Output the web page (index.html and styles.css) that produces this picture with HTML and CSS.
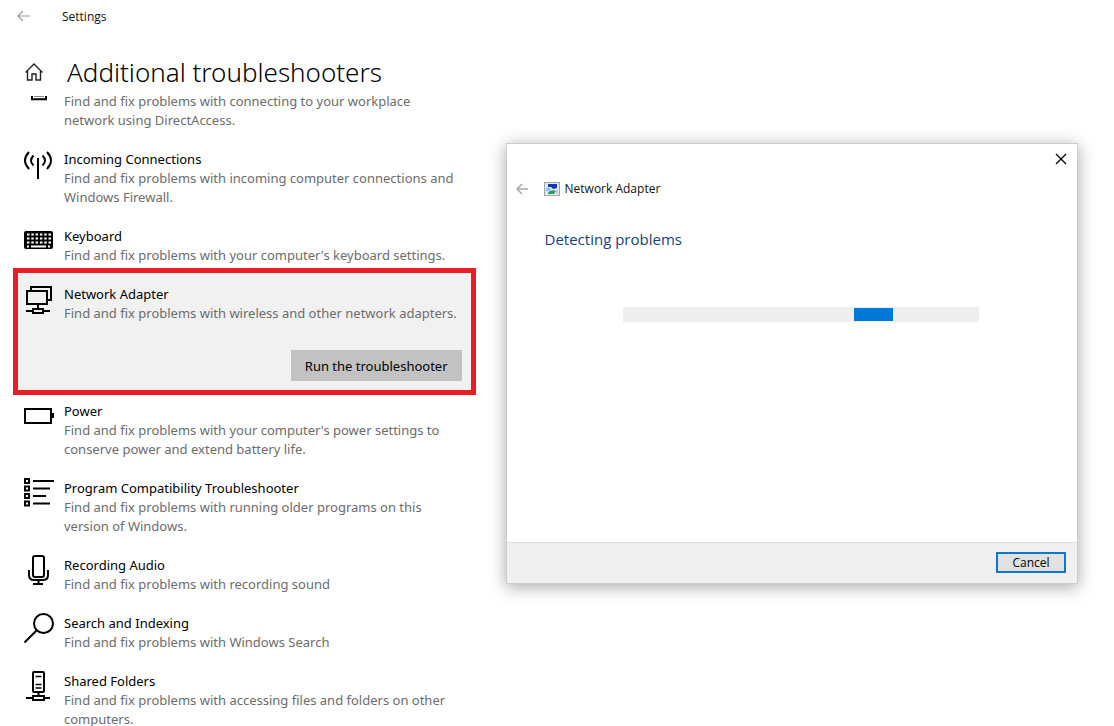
FILE: index.html
```
<!DOCTYPE html>
<html lang="en">
<head>
<meta charset="utf-8">
<title>Settings</title>
<link rel="stylesheet" href="styles.css">
</head>
<body>
<div class="desktop">
  <main class="settings">
    <header class="titlebar">
      <button class="back" type="button" aria-label="Back">
        <svg width="14" height="12" viewBox="0 0 14 12"><path d="M1 6H13M6 1L1 6L6 11" fill="none" stroke="#999" stroke-width="1.2"/></svg>
      </button>
      <span>Settings</span>
    </header>
    <div class="heading">
      <a class="home" href="#" aria-label="Home">
        <svg width="20" height="20" viewBox="0 0 20 20"><path d="M1.5 10.5L10 2L18.500 10.500M3.500 9V18H8V12H12V18H16.500V9" fill="none" stroke="#222" stroke-width="1.400"/></svg>
      </a>
      <h1>Additional troubleshooters</h1>
    </div>
    <ul class="list">
      <li class="item item-partial">
        <svg class="icon" viewBox="0 0 30 30"><path d="M8 4V7.200H22V4" fill="none" stroke="#000" stroke-width="2"/><path d="M10 4.500H20" stroke="#888"/></svg>
        <div class="text"><p>Find and fix problems with connecting to your workplace network using DirectAccess.</p></div>
      </li>
      <li class="item">
        <svg class="icon" viewBox="0 0 30 30" fill="none" stroke="#000" stroke-width="2"><path d="M14 9V30M5 3Q-3 11.500 5 20M23 3Q31 11.500 23 20M9.500 6.500Q4.500 11.500 9.500 16.500M18.500 6.500Q23.500 11.500 18.500 16.500"/></svg>
        <div class="text"><h2>Incoming Connections</h2><p>Find and fix problems with incoming computer connections and Windows Firewall.</p></div>
      </li>
      <li class="item">
        <svg class="icon" viewBox="0 0 30 30"><rect y="5" width="29" height="18" rx="2"/><g stroke="#fff" stroke-width="2"><path d="M3 8.500H27M3 12.500H27M3 16.500H27" stroke-dasharray="2.500 1.800"/><path d="M3 20.500H5M7 20.500H22M24 20.500H26"/></g></svg>
        <div class="text"><h2>Keyboard</h2><p>Find and fix problems with your computer's keyboard settings.</p></div>
      </li>
      <li class="item item-selected">
        <svg class="icon" viewBox="0 0 30 30" fill="none" stroke="#000" stroke-width="2"><path d="M7 6V3H27V16H24M3 7H23V20H3ZM14 20V25M2 27H8M20 27H26M9 25H19V29H9Z"/></svg>
        <div class="text"><h2>Network Adapter</h2><p>Find and fix problems with wireless and other network adapters.</p></div>
        <button class="run" type="button">Run the troubleshooter</button>
      </li>
      <li class="item">
        <svg class="icon" viewBox="0 0 30 30"><rect x="1" y="8" width="26" height="14" fill="none" stroke="#000" stroke-width="2"/><path d="M28 12H30V17H28Z"/></svg>
        <div class="text"><h2>Power</h2><p>Find and fix problems with your computer's power settings to conserve power and extend battery life.</p></div>
      </li>
      <li class="item">
        <svg class="icon" viewBox="0 0 30 30" fill="none" stroke="#000" stroke-width="2"><path d="M1 1H5V5H1ZM1 8.500H5V12.500H1ZM1 16H5V20H1ZM1 23.500H5V27.500H1ZM9 3H30M9 10.500H26M9 18H22M9 25.500H26"/></svg>
        <div class="text"><h2>Program Compatibility Troubleshooter</h2><p>Find and fix problems with running older programs on this version of Windows.</p></div>
      </li>
      <li class="item">
        <svg class="icon" viewBox="0 0 30 30" fill="none" stroke="#000" stroke-width="2"><rect x="9" y="1" width="11" height="21" rx="2"/><path d="M5 15V20Q5 25 10 25H19Q24 25 24 20V15M14.500 25V29M9 29H19"/></svg>
        <div class="text"><h2>Recording Audio</h2><p>Find and fix problems with recording sound</p></div>
      </li>
      <li class="item">
        <svg class="icon" viewBox="0 0 30 30" fill="none" stroke="#000" stroke-width="2"><circle cx="19.500" cy="10.500" r="9.500"/><path d="M12.500 17.500L0.500 29.500"/></svg>
        <div class="text"><h2>Search and Indexing</h2><p>Find and fix problems with Windows Search</p></div>
      </li>
      <li class="item">
        <svg class="icon" viewBox="0 0 30 30" fill="none" stroke="#000" stroke-width="2"><rect x="9" y="1" width="11" height="20" rx="1"/><path d="M11.500 5.500H17.500M11.500 13.500H17.500M11.500 17H17.500" stroke-width="1.500"/><path d="M14.500 21V25M2 27H9M20 27H26M9 25H20V29H9Z"/></svg>
        <div class="text"><h2>Shared Folders</h2><p>Find and fix problems with accessing files and folders on other computers.</p></div>
      </li>
    </ul>
  </main>
  <section class="dialog" role="dialog" aria-labelledby="dialog-title">
    <div class="dialog-top">
      <button class="close" type="button" aria-label="Close"><svg width="12" height="12" viewBox="0 0 12 12"><path d="M1 1L11 11M11 1L1 11" stroke="#000" stroke-width="1.300"/></svg></button>
    </div>
    <div class="dialog-head">
      <button class="back" type="button" aria-label="Back"><svg width="14" height="12" viewBox="0 0 14 12"><path d="M2 6H13M7 1L2 6L7 11" fill="none" stroke="#aaa" stroke-width="1.500"/></svg></button>
      <svg class="app-icon" width="16" height="14" viewBox="0 0 16 14"><rect x=".5" y=".5" width="15" height="13" fill="#e3eaf0" stroke="#9aa4aa"/><path d="M4 2H13V6L9 7L7 5H4Z" fill="#1737b5"/><path d="M2 6Q5 5 7 7L5 9H2Z" fill="#7fc4ea"/><path d="M4 11Q6 7 12 9L10 12H4Z" fill="#2f9d59"/><path d="M12 8H14V12H12Z" fill="#bccbd5"/></svg>
      <span id="dialog-title">Network Adapter</span>
    </div>
    <div class="dialog-body">
      <h2>Detecting problems</h2>
      <div class="track" role="progressbar" aria-label="Detecting problems"><div class="bar"></div></div>
    </div>
    <footer class="dialog-foot"><button class="cancel" type="button">Cancel</button></footer>
  </section>
</div>
</body>
</html>
```
FILE: styles.css
```
* { box-sizing: border-box; }
body {
  margin: 0;
  background: #fff;
  color: #111;
  font: 13px/20px "Noto Sans", "Open Sans", sans-serif;
  overflow: hidden;
}
h1, h2, p, ul { margin: 0; padding: 0; font-weight: 400; }
button { margin: 0; padding: 0; border: 0; background: none; font: inherit; color: inherit; }
svg { display: block; flex: none; }

.desktop {
  display: flex;
  align-items: flex-start;
  gap: 30px;
  height: 100vh;
  padding-right: 36px;
}
.settings { flex: 476 1 0; min-width: 0; }
.titlebar {
  display: flex;
  align-items: center;
  gap: 31px;
  height: 34px;
  padding-left: 17px;
  font-family: "Open Sans", sans-serif;
  font-size: 12px;
}
.titlebar .back { padding-bottom: 3px; }
.heading {
  display: flex;
  align-items: center;
  gap: 23px;
  height: 40px;
  margin-top: 18px;
  padding-left: 24px;
}
.heading h1 { font-size: 26px; line-height: 40px; font-weight: 300; color: #000; white-space: nowrap; }

.list { list-style: none; padding-left: 13px; }
.item {
  display: grid;
  grid-template-columns: 30px 1fr;
  column-gap: 10px;
  padding: 16px 14px 3px 11px;
}
.item-partial { padding-top: 0; padding-right: 40px; }
.icon { width: 30px; height: 30px; overflow: visible; }
.item h2 { font-size: 13px; line-height: 20px; color: #000; }
.item p { font-size: 13px; line-height: 19px; color: #6c6c6c; }
.item-selected {
  margin-bottom: -10px;
  padding: 11px 9px 9px 6px;
  border: 5px solid #ea1c24;
  background: #f1f1f1;
}
.run {
  grid-column: 1 / -1;
  justify-self: end;
  height: 31px;
  margin-top: 27px;
  padding: 0 14px;
  background: #c2c2c2;
  color: #000;
}

.dialog {
  flex: 571 1 0;
  min-width: 0;
  margin-top: 143px;
  border: 1px solid #ccc;
  background: #fff;
  box-shadow: 0 3px 16px rgba(0, 0, 0, .35);
  font-family: "Open Sans", sans-serif;
}
.dialog-top { display: flex; justify-content: flex-end; padding: 8px 9px 0; }
.close { padding: 1px; }
.dialog-head { display: flex; align-items: center; height: 20px; margin-top: 13px; padding-left: 8px; font-size: 12px; }
.app-icon { margin: 0 5px 0 15px; }
.dialog-body { padding: 28px 98px 220px 38px; }
.dialog-body h2 { font-size: 15px; line-height: 24px; color: #153f7e; }
.track { display: flex; height: 15px; margin: 56px 0 0 78px; padding: 1px; border-radius: 1px; background: #eee; }
.bar { width: 11%; margin-left: 65%; background: #0078d7; }
.dialog-foot { display: flex; justify-content: flex-end; padding: 9px 11px 10px; border-top: 1px solid #dcdcdc; background: #f0f0f0; }
.cancel { width: 70px; height: 21px; border: 2px solid #0b78c9; background: #e1e1e1; color: #000; font-size: 12px; line-height: 17px; }
```
